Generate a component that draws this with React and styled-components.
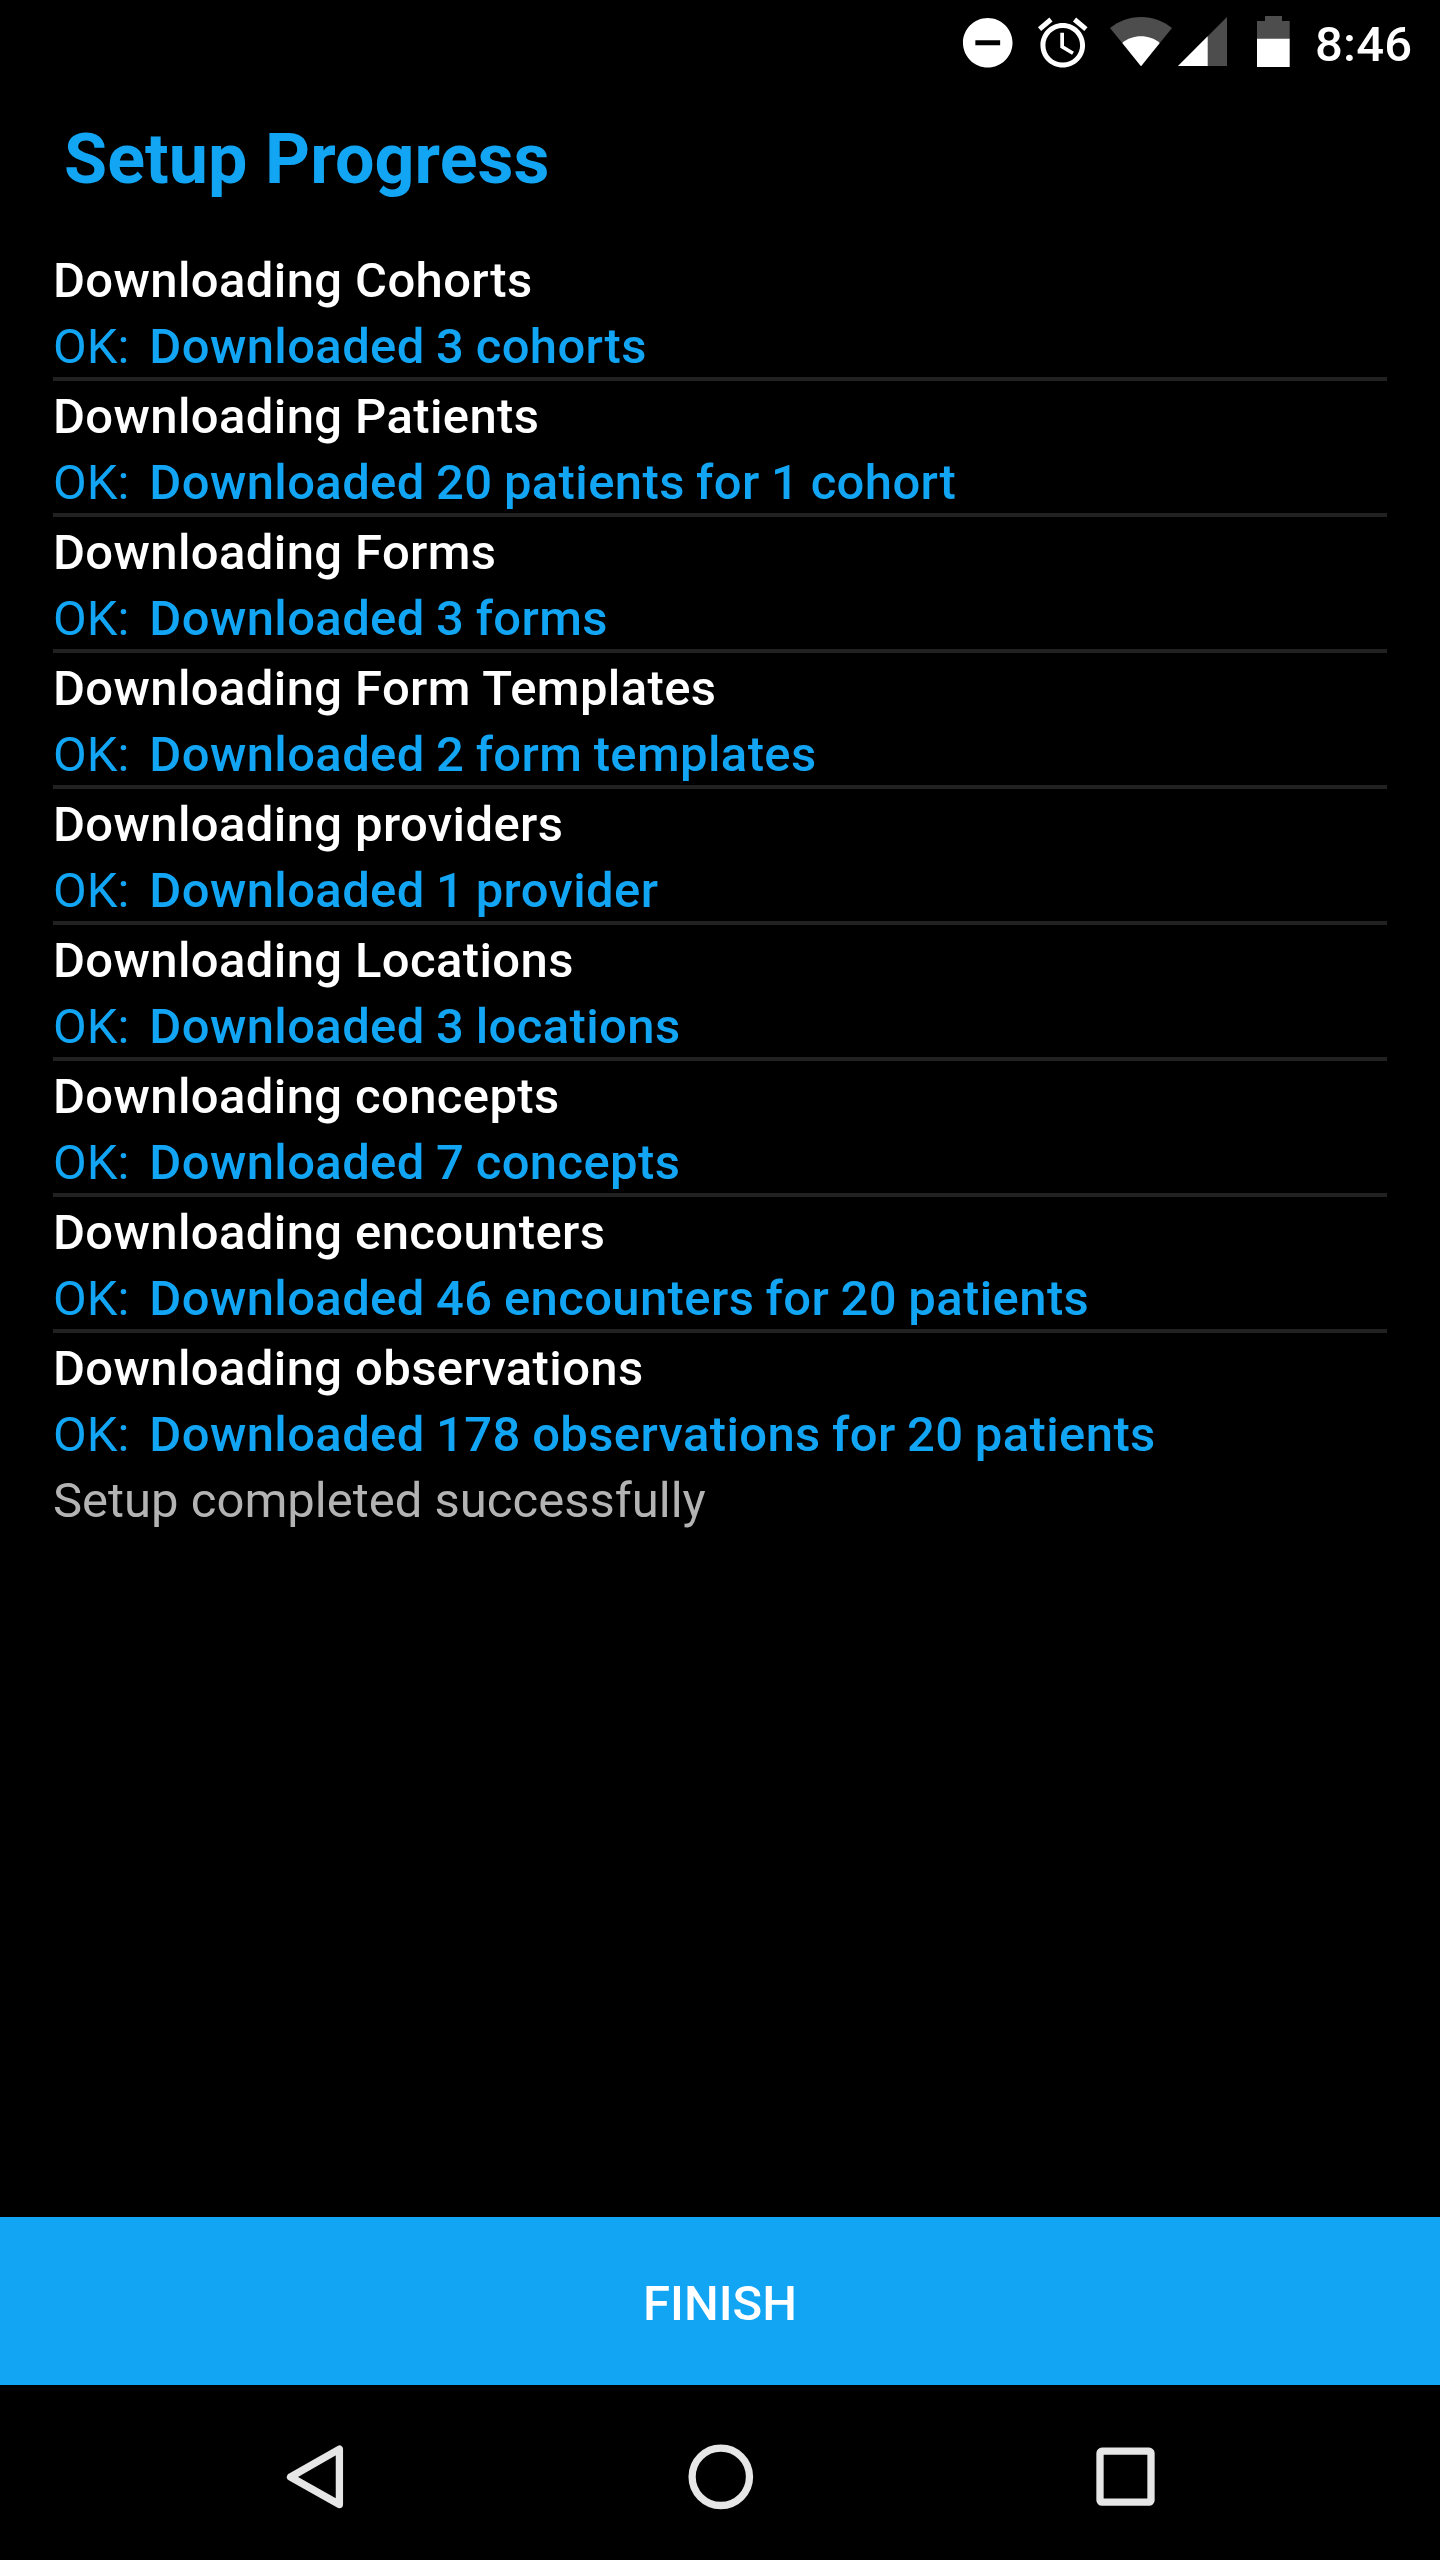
import React from 'react';
import styled, { createGlobalStyle, css } from 'styled-components';

const color = {
  black: '#000000',
  white: '#ffffff',
  blue: '#12a5f4',
  divider: '#212121',
  grey: '#b3b3b3',
  dim: '#4d4d4d',
  nav: '#e6e6e6',
};

const steps = [
  { title: 'Downloading Cohorts', result: 'Downloaded 3 cohorts' },
  { title: 'Downloading Patients', result: 'Downloaded 20 patients for 1 cohort' },
  { title: 'Downloading Forms', result: 'Downloaded 3 forms' },
  { title: 'Downloading Form Templates', result: 'Downloaded 2 form templates' },
  { title: 'Downloading providers', result: 'Downloaded 1 provider' },
  { title: 'Downloading Locations', result: 'Downloaded 3 locations' },
  { title: 'Downloading concepts', result: 'Downloaded 7 concepts' },
  { title: 'Downloading encounters', result: 'Downloaded 46 encounters for 20 patients' },
  { title: 'Downloading observations', result: 'Downloaded 178 observations for 20 patients' },
];

export default function App() {
  return (
    <Screen>
      <GlobalStyle />
      <StatusBar />
      <Title>Setup Progress</Title>
      <StepList>
        {steps.map((step) => (
          <Step key={step.title}>
            <StepTitle>{step.title}</StepTitle>
            <StepResult>
              <Ok>OK:</Ok>
              <Message>{step.result}</Message>
            </StepResult>
          </Step>
        ))}
      </StepList>
      <Summary>Setup completed successfully</Summary>
      <FinishButton type="button">FINISH</FinishButton>
      <NavBar />
    </Screen>
  );
}

function StatusBar() {
  return (
    <StatusWrapper>
      <StatusIcon width="60" height="60" viewBox="0 0 24.2 24.2" $gap={15}>
        <path
          fill={color.white}
          d="M12 2C6.48 2 2 6.48 2 12s4.48 10 10 10 10-4.48 10-10S17.52 2 12 2zm5 11H7v-2h10v2z"
        />
      </StatusIcon>
      <StatusIcon width="60" height="60" viewBox="0 0 24.2 24.2" $gap={17}>
        <path
          fill={color.white}
          d="M22 5.72l-4.6-3.86-1.29 1.53 4.6 3.86L22 5.72zM7.88 3.39L6.6 1.86 2 5.71l1.29 1.53 4.59-3.85zM12.5 8H11v6l4.75 2.85.75-1.23-4-2.37V8zM12 4c-4.97 0-9 4.03-9 9s4.02 9 9 9c4.97 0 9-4.03 9-9s-4.03-9-9-9zm0 16c-3.87 0-7-3.13-7-7s3.13-7 7-7 7 3.13 7 7-3.13 7-7 7z"
        />
      </StatusIcon>
      {/* wifi */}
      <StatusIcon width="62" height="60" viewBox="0 0 62 60" $gap={6}>
        <path fill={color.dim} d="M31 53.3L0 15C8 8.5 19 4 31 4s23 4.5 31 11z" />
        <path fill={color.white} d="M31 53.3L12.3 30C17.5 25.5 24 23.3 31 23.3S44.5 25.5 49.7 30z" />
      </StatusIcon>
      {/* cell signal */}
      <StatusIcon width="49" height="60" viewBox="0 0 49 60" $gap={30}>
        <path fill={color.dim} d="M0 53L49 4v49z" />
        <path fill={color.white} d="M0 53L29.7 23.3V53z" />
      </StatusIcon>
      {/* battery */}
      <StatusIcon width="33" height="60" viewBox="0 0 33 60" $gap={25}>
        <path fill={color.dim} d="M8 3h17v5h7.7v18H0V8h8z" />
        <path fill={color.white} d="M0 25.8h32.7V54H0z" />
      </StatusIcon>
      <Clock>8:46</Clock>
    </StatusWrapper>
  );
}

function NavBar() {
  return (
    <NavWrapper>
      <svg width="70" height="70" viewBox="0 0 70 70">
        <path d="M7.5 35L56.4 7.1V62.500z" />
      </svg>
      <svg width="70" height="70" viewBox="0 0 70 70">
        <circle cx="33.8" cy="34.8" r="28.7" />
      </svg>
      <svg width="70" height="70" viewBox="0 0 70 70">
        <rect x="10" y="9.2" width="51" height="51" rx="2" />
      </svg>
    </NavWrapper>
  );
}

const GlobalStyle = createGlobalStyle`
  * {
    box-sizing: border-box;
  }
  body {
    margin: 0;
    background: ${color.black};
    font-family: Roboto, sans-serif;
  }
`;

/* the line box is taller than the row so the text sits low in it */
const textLine = css`
  height: 66px;
  font-size: 49px;
  line-height: 72px;
  white-space: nowrap;
`;

const Screen = styled.main`
  display: flex;
  flex-direction: column;
  width: 1440px;
  height: 2560px;
  overflow: hidden;
  background: ${color.black};
`;

const StatusWrapper = styled.header`
  display: flex;
  align-items: center;
  height: 84px;
  padding: 1px 0 0 958px;
`;
const StatusIcon = styled.svg`
  flex: none;
  margin-right: ${(props) => props.$gap}px;
`;
const Clock = styled.span`
  ${textLine}
  line-height: 69px;
  font-weight: 500;
  letter-spacing: 0.2px;
  color: ${color.white};
`;

const Title = styled.h1`
  margin: 0;
  padding: 33px 64px 0;
  height: 161px;
  font-size: 70px;
  line-height: 84px;
  font-weight: 700;
  letter-spacing: 0.08px;
  color: ${color.blue};
`;

const StepList = styled.ul`
  margin: 0;
  padding: 0 53px;
  list-style: none;
`;
const Step = styled.li`
  & + & {
    border-top: 4px solid ${color.divider};
  }
`;
const StepTitle = styled.div`
  ${textLine}
  font-weight: 500;
  letter-spacing: 0.38px;
  color: ${color.white};
`;
const StepResult = styled.div`
  ${textLine}
  display: flex;
  gap: 20px;
  color: ${color.blue};
`;
const Ok = styled.span`
  font-weight: 400;
`;
const Message = styled.span`
  font-weight: 500;
  letter-spacing: 0.38px;
  word-spacing: -1.2px;
`;

const Summary = styled.p`
  ${textLine}
  margin: 0;
  padding: 0 53px;
  color: ${color.grey};
`;

const FinishButton = styled.button`
  margin-top: auto;
  height: 168px;
  flex: none;
  padding: 4px 0 0;
  border: 0;
  background: ${color.blue};
  color: ${color.white};
  font-family: inherit;
  font-size: 49px;
  font-weight: 500;
`;

const NavWrapper = styled.nav`
  display: flex;
  align-items: center;
  justify-content: space-between;
  flex: none;
  height: 175px;
  padding: 8px 280px 0 283px;

  svg {
    fill: none;
    stroke: ${color.nav};
    stroke-width: 7.3px;
    stroke-linejoin: round;
  }
`;
